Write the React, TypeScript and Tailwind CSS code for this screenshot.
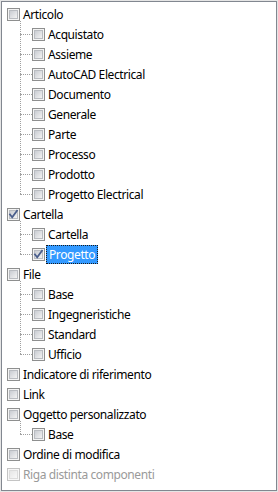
import React from "react";

type Node = {
  label: string;
  checked?: boolean;
  selected?: boolean;
  disabled?: boolean;
  children?: Node[];
};

const data: Node[] = [
  {
    label: "Articolo",
    children: [
      { label: "Acquistato" },
      { label: "Assieme" },
      { label: "AutoCAD Electrical" },
      { label: "Documento" },
      { label: "Generale" },
      { label: "Parte" },
      { label: "Processo" },
      { label: "Prodotto" },
      { label: "Progetto Electrical" },
    ],
  },
  {
    label: "Cartella",
    checked: true,
    children: [{ label: "Cartella" }, { label: "Progetto", checked: true, selected: true }],
  },
  {
    label: "File",
    children: [{ label: "Base" }, { label: "Ingegneristiche" }, { label: "Standard" }, { label: "Ufficio" }],
  },
  { label: "Indicatore di riferimento" },
  { label: "Link" },
  { label: "Oggetto personalizzato", children: [{ label: "Base" }] },
  { label: "Ordine di modifica" },
  { label: "Riga distinta componenti", disabled: true },
];

function Checkbox({ checked, disabled }: { checked?: boolean; disabled?: boolean }) {
  return (
    <span
      className={
        "relative flex h-[13px] w-[13px] shrink-0 items-center justify-center border " +
        (disabled ? "border-[#c4c4c4] bg-[#f7f7f7]" : "border-[#8e8f8f] bg-[#f4f4f4]")
      }
    >
      <span
        className={
          "block h-[9px] w-[9px] border bg-gradient-to-br " +
          (disabled
            ? "border-[#dcdcdc] from-[#e6e6e6] to-[#f8f8f8]"
            : "border-[#b9bcc1] from-[#c9ccd2] to-[#f3f3f3]")
        }
      />
      {checked && (
        <svg className="absolute left-[-1px] top-[-1px]" width="13" height="13" viewBox="0 0 13 13">
          <path d="M3 6.5 L5.2 9.3 L10 2.8" fill="none" stroke="#4a5e8c" strokeWidth="1.8" strokeLinecap="square" />
        </svg>
      )}
    </span>
  );
}

function Label({ node }: { node: Node }) {
  return (
    <span
      className={
        "ml-[1px] mt-[1px] flex h-[19px] items-center whitespace-nowrap px-[2px] leading-none " +
        (node.selected
          ? "border border-dotted border-[#1a1a1a] bg-[#3399ff] px-[1px] text-white"
          : node.disabled
          ? "text-[#9a9a9a]"
          : "text-black")
      }
    >
      {node.label}
    </span>
  );
}

function Row({ node, child }: { node: Node; child?: boolean }) {
  return (
    <div className={"relative flex h-[20px] items-start " + (child ? "pl-[30px]" : "pl-[5px]")}>
      {child && (
        <span className="absolute left-[18px] top-[10px] w-[12px] border-t border-dotted border-[#a0a0a0]" />
      )}
      <span className="pt-[4px]">
        <Checkbox checked={node.checked} disabled={node.disabled} />
      </span>
      <Label node={node} />
    </div>
  );
}

export default function App() {
  return (
    <div
      className="h-[492px] w-[278px] border border-[#e5e5e5] bg-white text-[12px] tracking-[-0.4px]"
      style={{ fontFamily: '"Noto Sans", "Open Sans", sans-serif' }}
    >
      <div className="h-full w-full border border-[#828790] bg-white pt-[2px]">
        {data.map((n) => (
          <div key={n.label}>
            <Row node={n} />
            {n.children && (
              <div className="relative">
                <span className="absolute left-[18px] top-[-3px] bottom-[10px] border-l border-dotted border-[#a0a0a0]" />
                {n.children.map((c) => (
                  <Row key={c.label} node={c} child />
                ))}
              </div>
            )}
          </div>
        ))}
      </div>
    </div>
  );
}
